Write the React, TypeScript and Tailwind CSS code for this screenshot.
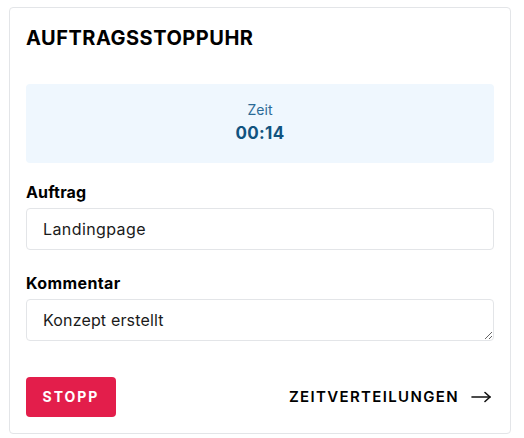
import React from "react";

export default function App() {
  return (
    <div className="min-h-screen bg-white pl-[9px] pt-[7px] pr-[13px]" style={{ fontFamily: "Inter, 'Noto Sans', sans-serif" }}>
      <div className="w-[502px] rounded border border-[#e3e5e8] bg-white p-4">
        <h1 className="text-xl leading-7 font-bold tracking-[0.025em] text-black">AUFTRAGSSTOPPUHR</h1>

        <div className="mt-8 rounded bg-[#eff7fe] pt-4 pb-[17px] text-center">
          <div className="text-sm leading-5 text-[#2b6a96]">Zeit</div>
          <div className="text-[17px] leading-[26px] font-bold tracking-[0.02em] text-[#11537f]">00:14</div>
        </div>

        <label className="mt-[17px] mb-1 block text-base leading-6 font-bold tracking-[0.01em] text-black">Auftrag</label>
        <input
          readOnly
          value="Landingpage"
          className="block h-[42px] w-full rounded border border-[#e3e5e8] px-4 text-base leading-6 tracking-[0.025em] text-[#1a1a1a] outline-none"
        />

        <label className="mt-[21px] mb-1 block text-base leading-6 font-bold tracking-[0.025em] text-black">Kommentar</label>
        <textarea
          readOnly
          value="Konzept erstellt"
          className="block h-[42px] w-full rounded border border-[#e3e5e8] px-4 py-2 text-base leading-6 tracking-[0.01em] text-[#1a1a1a] outline-none"
        />

        <div className="mt-9 flex items-center justify-between">
          <button className="h-10 w-[90px] rounded bg-[#e31e4b] text-sm leading-6 font-bold tracking-[0.14em] text-white">STOPP</button>
          <div className="mr-[3px] flex items-center gap-3">
            <span className="text-[15px] leading-6 font-semibold tracking-[0.09em] text-black">ZEITVERTEILUNGEN</span>
            <svg width="20" height="12" viewBox="0 0 20 12" fill="none" stroke="#111" strokeWidth="1.6" strokeLinecap="round" strokeLinejoin="round">
              <path d="M1 6h18" />
              <path d="M14 1.5 19 6l-5 4.5" />
            </svg>
          </div>
        </div>
      </div>
    </div>
  );
}
